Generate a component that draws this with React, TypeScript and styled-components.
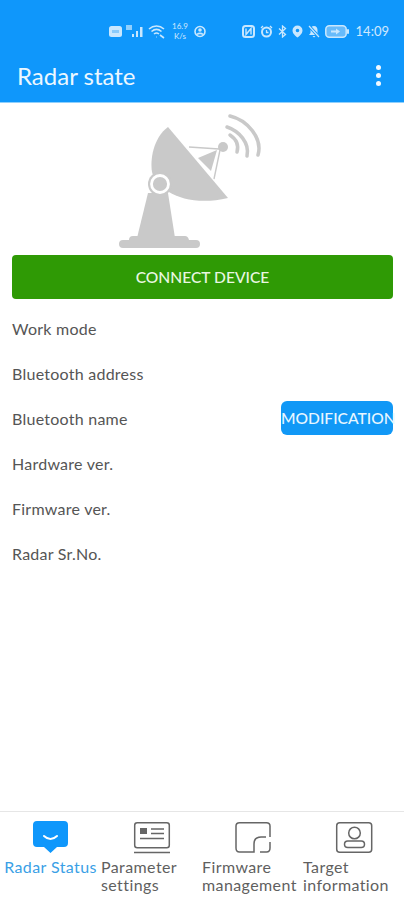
import styled, { createGlobalStyle } from "styled-components";

const GlobalStyle = createGlobalStyle`
  html, body {
    margin: 0;
    padding: 0;
    background: #ffffff;
    font-family: Lato, "Noto Sans", "Liberation Sans", sans-serif;
  }
`;

const Page = styled.div`
  display: flex;
  flex-direction: column;
  width: 404px;
  height: 900px;
  overflow: hidden;
`;

const TopArea = styled.header`
  background: #0f97fb;
  color: #f0f8ff;
  border-bottom: 1px solid #8fd0fd;
`;

const StatusBar = styled.div`
  display: flex;
  align-items: center;
  height: 24px;
  padding: 19px 15px 11px 109px;
`;

const StatusGroup = styled.div`
  display: flex;
  align-items: center;
  gap: ${({ $gap }: { $gap: number }) => $gap}px;
`;

const Speed = styled.span`
  width: 20px;
  font-size: 8px;
  line-height: 10px;
  text-align: center;
  opacity: 0.85;
`;

const Clock = styled.span`
  font-size: 13px;
  margin-left: 2px;
  opacity: 0.85;
`;

const Spacer = styled.div`
  flex: 1;
`;

const TitleBar = styled.div`
  display: flex;
  align-items: center;
  justify-content: space-between;
  height: 42px;
  padding: 0 23px 6px 17px;
`;

const Title = styled.h1`
  margin: 0;
  font-size: 24px;
  font-weight: 400;
  color: #ecf7ff;
`;

const MenuDots = styled.div`
  display: flex;
  flex-direction: column;
  gap: 3px;

  span {
    width: 5px;
    height: 5px;
    border-radius: 50%;
    background: #f2f9ff;
  }
`;

const Content = styled.main`
  flex: 1;
  padding: 0 11px 0 12px;
`;

const RadarImage = styled.svg`
  display: block;
  width: 180px;
  height: 152px;
  margin: 0 auto;
  fill: #c9c9c9;
`;

const ConnectButton = styled.button`
  display: block;
  width: 100%;
  height: 44px;
  border: 0;
  border-radius: 4px;
  background: #2f9a05;
  color: #e9f7e2;
  font-family: inherit;
  font-size: 15.6px;
  font-weight: 500;
`;

const InfoList = styled.div`
  display: flex;
  flex-direction: column;
  margin-top: 7px;
`;

const InfoRow = styled.div`
  display: flex;
  align-items: center;
  justify-content: space-between;
  height: 45px;
  font-size: 16px;
  letter-spacing: 0.25px;
  color: #555555;
`;

const ModifyButton = styled.button`
  width: 112px;
  height: 34px;
  margin-bottom: 2px;
  padding: 0;
  border: 0;
  border-radius: 6px;
  background: #1198f6;
  color: #e8f6ff;
  font-family: inherit;
  font-size: 15.6px;
  font-weight: 500;
  white-space: nowrap;
`;

const BottomNav = styled.nav`
  display: grid;
  grid-template-columns: repeat(4, 101px);
  height: 80px;
  border-top: 1px solid #e6e6e6;
  padding-top: 8px;
`;

const Tab = styled.div<{ $active?: boolean }>`
  display: flex;
  flex-direction: column;
  align-items: center;
  font-size: 16px;
  letter-spacing: 0.4px;
  line-height: 18px;
  color: ${({ $active }) => ($active ? "#3a9fe6" : "#5f5f5f")};
`;

const TabIcon = styled.svg`
  display: block;
  flex: none;
  width: 40px;
  height: 36px;
  margin-bottom: 2px;
`;

const TabLabel = styled.div<{ $center?: boolean }>`
  align-self: stretch;
  white-space: nowrap;
  text-align: ${({ $center }) => ($center ? "center" : "left")};
`;

const StatusIcon = styled.svg`
  display: block;
  flex: none;
  opacity: 0.85;
`;

const rows = [
  "Work mode",
  "Bluetooth address",
  "Bluetooth name",
  "Hardware ver.",
  "Firmware ver.",
  "Radar Sr.No.",
];

const App = () => {
  return (
    <Page>
      <GlobalStyle />
      <TopArea>
        <StatusBar>
          <StatusGroup $gap={4}>
            <StatusIcon width="13" height="11" viewBox="0 0 13 11">
              <rect width="13" height="11" rx="2.5" fill="#eaf6ff" />
              <rect x="3" y="4" width="7" height="3" fill="#9fd4fb" />
            </StatusIcon>
            <StatusIcon width="18" height="13" viewBox="0 0 18 13" fill="#eaf6ff">
              <rect x="0" y="0" width="6" height="5" opacity="0.7" />
              <rect x="6" y="9" width="2" height="3" />
              <rect x="10" y="6" width="2" height="6" />
              <rect x="14" y="2" width="2.5" height="10" />
            </StatusIcon>
            <StatusIcon width="18" height="15" viewBox="0 0 18 15" fill="none" stroke="#eaf6ff" strokeWidth="1.6">
              <path d="M1 5c4.500-4 10.500-4 15 0" />
              <path d="M3.500 7.500c3-2.500 7-2.500 10 0" />
              <path d="M6 10c1.500-1.200 3.500-1.200 5 0" />
              <path d="M8.500 13h.5M12 11l4 3" />
            </StatusIcon>
            <Speed>
              16.9
              <br />
              K/s
            </Speed>
            <StatusIcon width="12" height="13" viewBox="0 0 12 13" fill="none" stroke="#eaf6ff" strokeWidth="1.6">
              <circle cx="6" cy="6.500" r="5" />
              <circle cx="6" cy="5" r="1.800" fill="#eaf6ff" stroke="none" />
              <path d="M3 9.500c1.500-1.500 4.500-1.500 6 0" />
            </StatusIcon>
          </StatusGroup>
          <Spacer />
          <StatusGroup $gap={5}>
            <StatusIcon width="13" height="13" viewBox="0 0 13 13" fill="none" stroke="#eaf6ff" strokeWidth="2">
              <rect x="1" y="1" width="11" height="11" rx="2.500" />
              <path d="M4 3.500v6l5-6v6" strokeWidth="1.400" />
            </StatusIcon>
            <StatusIcon width="13" height="13" viewBox="0 0 13 13" fill="none" stroke="#eaf6ff" strokeWidth="2">
              <circle cx="6.500" cy="7" r="4.500" />
              <path d="M1 3l2-2M12 3l-2-2M6.500 5v2.500h2" strokeWidth="1.300" />
            </StatusIcon>
            <StatusIcon width="9" height="13" viewBox="0 0 9 13" fill="none" stroke="#eaf6ff" strokeWidth="1.300">
              <path d="M1 3.500l6.500 6-3 2.500V1l3 2.500-6.500 6" />
            </StatusIcon>
            <StatusIcon width="11" height="13" viewBox="0 0 11 13">
              <path
                fillRule="evenodd"
                fill="#eaf6ff"
                d="M5.500 0.500a5 5 0 0 1 5 5c0 3-3 5.500-5 7-2-1.500-5-4-5-7a5 5 0 0 1 5-5zm0 3.200a1.800 1.800 0 1 0 0 3.600 1.800 1.800 0 0 0 0-3.600z"
              />
            </StatusIcon>
            <StatusIcon width="12" height="13" viewBox="0 0 12 13">
              <path fill="#eaf6ff" d="M6 1c2.500 0 3.500 2 3.500 4v3l1.500 2H1l1.500-2V5C2.500 3 3.500 1 6 1zM4.500 11h3L6 12.500z" />
              <path d="M1 1l10 11" stroke="#0f97fb" strokeWidth="3" />
              <path d="M1 1l10 11" stroke="#eaf6ff" strokeWidth="1.200" />
            </StatusIcon>
            <StatusIcon width="24" height="13" viewBox="0 0 24 13">
              <rect x="0.800" y="0.800" width="20.400" height="11.400" rx="3.500" fill="#77c2fb" stroke="#eaf6ff" strokeWidth="1.500" />
              <rect x="22" y="4" width="2" height="5" rx="1" fill="#eaf6ff" />
              <path d="M6 5.500h5V3.500l4 3-4 3V7.500H6z" fill="#eaf6ff" />
            </StatusIcon>
            <Clock>14:09</Clock>
          </StatusGroup>
        </StatusBar>
        <TitleBar>
          <Title>Radar state</Title>
          <MenuDots>
            <span />
            <span />
            <span />
          </MenuDots>
        </TitleBar>
      </TopArea>
      <Content>
        <RadarImage viewBox="112 103 180 152">
          <path d="M167 127C152 138 149 160 151 172C155 190 185 208 227 198Z" />
          <path d="M147 193H167L174 238H136Z" />
          <path d="M128 240Q128 236 132 236H184Q187 236 188 240H195Q199 240 199 244Q199 248 195 248H122Q118 248 118 244Q118 240 122 240Z" />
          <circle cx="159" cy="184" r="12" fill="#c9c9c9" />
          <circle cx="159" cy="184" r="8.500" fill="none" stroke="#ffffff" strokeWidth="2.800" />
          <path d="M197 158L216 150L210 171Z" />
          <circle cx="222" cy="147" r="5" />
          <path d="M188 147L218 149M219 150L213 179" fill="none" stroke="#c9c9c9" strokeWidth="1.400" />
          <g fill="none" stroke="#c9c9c9" strokeWidth="3.500" strokeLinecap="round">
            <path d="M229 135C235 139 238 145 236 152" />
            <path d="M226 127C238 131 249 143 246 156" />
            <path d="M229 116C246 120 262 138 257 155" />
          </g>
        </RadarImage>
        <ConnectButton>CONNECT DEVICE</ConnectButton>
        <InfoList>
          {rows.map((label) => (
            <InfoRow key={label}>
              {label}
              {label === "Bluetooth name" && <ModifyButton>MODIFICATION</ModifyButton>}
            </InfoRow>
          ))}
        </InfoList>
      </Content>
      <BottomNav>
        <Tab $active>
          <TabIcon viewBox="0 0 40 36">
            <path
              d="M6 1H33Q37 1 37 5V23Q37 27 33 27H26L19.500 33L13 27H6Q2 27 2 23V5Q2 1 6 1Z"
              fill="#0f97fb"
            />
            <path d="M13 16Q19.500 22 26 16" fill="none" stroke="#ffffff" strokeWidth="2" strokeLinecap="round" />
          </TabIcon>
          <TabLabel $center>Radar Status</TabLabel>
        </Tab>
        <Tab>
          <TabIcon viewBox="0 0 40 36" fill="none" stroke="#666666" strokeWidth="1.500">
            <rect x="2.700" y="2.700" width="34.600" height="25" rx="2.500" />
            <rect x="8" y="8" width="7" height="6" fill="#666666" stroke="none" />
            <path d="M19 9H32M19 13.500H32M8 18.500H32M2 32.500H38" />
          </TabIcon>
          <TabLabel>
            Parameter
            <br />
            settings
          </TabLabel>
        </Tab>
        <Tab>
          <TabIcon viewBox="0 0 40 36" fill="none" stroke="#666666" strokeWidth="1.500">
            <path d="M37 17V6Q37 2.700 33.500 2.700H6.500Q3 2.700 3 6V28Q3 32 6.500 32H21V24Q21 17 28 17H33" />
            <path d="M37 22V28Q37 32 33.500 32H27" />
          </TabIcon>
          <TabLabel>
            Firmware
            <br />
            management
          </TabLabel>
        </Tab>
        <Tab>
          <TabIcon viewBox="0 0 40 36" fill="none" stroke="#666666" strokeWidth="1.500">
            <rect x="2.700" y="2.700" width="35" height="29.500" rx="3" />
            <circle cx="20.500" cy="13" r="5.800" />
            <rect x="10.500" y="21" width="20" height="6.500" rx="3.250" />
          </TabIcon>
          <TabLabel>
            Target
            <br />
            information
          </TabLabel>
        </Tab>
      </BottomNav>
    </Page>
  );
};

export default App;
